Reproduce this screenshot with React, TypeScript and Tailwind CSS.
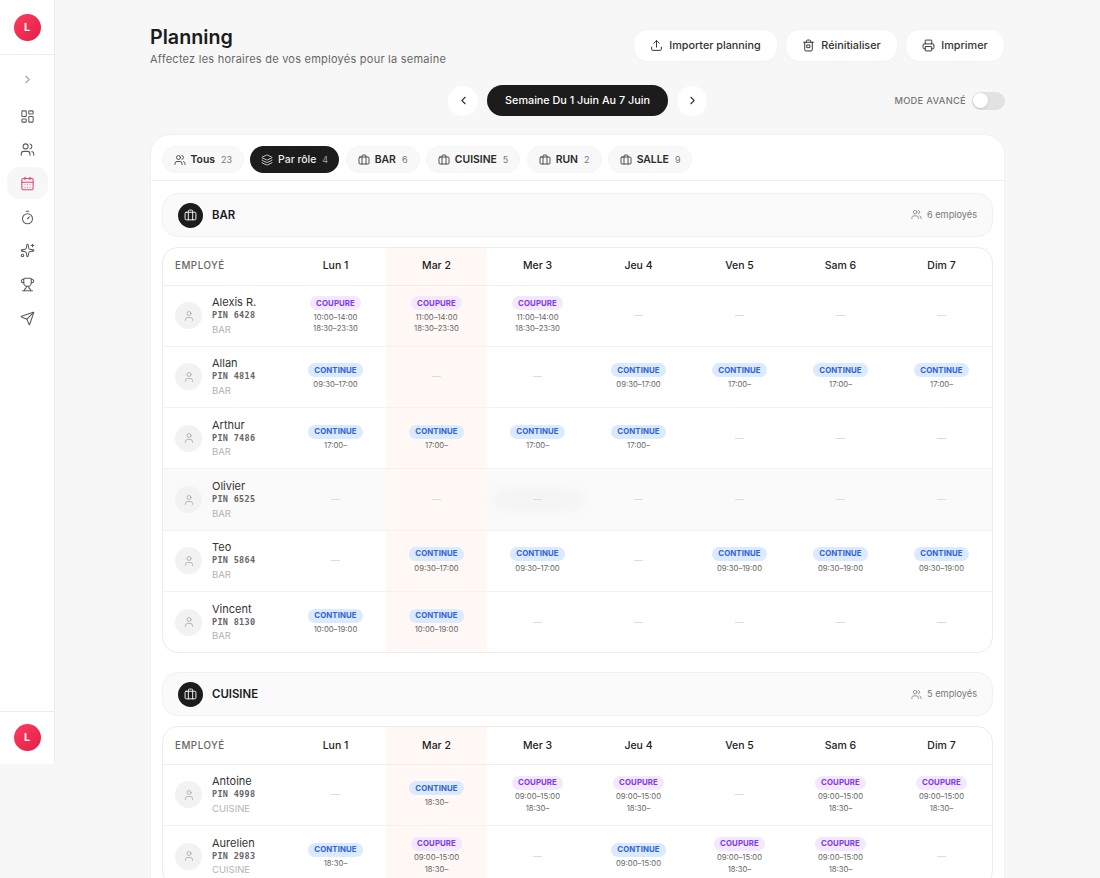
import {
  Briefcase,
  CalendarDays,
  ChevronLeft,
  ChevronRight,
  Layers,
  LayoutDashboard,
  Printer,
  Send,
  Sparkles,
  Timer,
  Trophy,
  Upload,
  User,
  Users,
} from 'lucide-react'

const jours = ['Lun 1', 'Mar 2', 'Mer 3', 'Jeu 4', 'Ven 5', 'Sam 6', 'Dim 7']

type Cell = null | { type: 'COUPURE' | 'CONTINUE'; heures: string[] }

const cou = (...heures: string[]): Cell => ({ type: 'COUPURE', heures })
const con = (...heures: string[]): Cell => ({ type: 'CONTINUE', heures })

type Employe = { nom: string; pin: string; cells: Cell[]; hover?: boolean }

const bar: Employe[] = [
  {
    nom: 'Alexis R.',
    pin: '6428',
    cells: [
      cou('10:00–14:00', '18:30–23:30'),
      cou('11:00–14:00', '18:30–23:30'),
      cou('11:00–14:00', '18:30–23:30'),
      null,
      null,
      null,
      null,
    ],
  },
  {
    nom: 'Allan',
    pin: '4814',
    cells: [
      con('09:30–17:00'),
      null,
      null,
      con('09:30–17:00'),
      con('17:00–'),
      con('17:00–'),
      con('17:00–'),
    ],
  },
  {
    nom: 'Arthur',
    pin: '7486',
    cells: [con('17:00–'), con('17:00–'), con('17:00–'), con('17:00–'), null, null, null],
  },
  { nom: 'Olivier', pin: '6525', cells: [null, null, null, null, null, null, null], hover: true },
  {
    nom: 'Teo',
    pin: '5864',
    cells: [
      null,
      con('09:30–17:00'),
      con('09:30–17:00'),
      null,
      con('09:30–19:00'),
      con('09:30–19:00'),
      con('09:30–19:00'),
    ],
  },
  {
    nom: 'Vincent',
    pin: '8130',
    cells: [con('10:00–19:00'), con('10:00–19:00'), null, null, null, null, null],
  },
]

const cuisine: Employe[] = [
  {
    nom: 'Antoine',
    pin: '4998',
    cells: [
      null,
      con('18:30–'),
      cou('09:00–15:00', '18:30–'),
      cou('09:00–15:00', '18:30–'),
      null,
      cou('09:00–15:00', '18:30–'),
      cou('09:00–15:00', '18:30–'),
    ],
  },
  {
    nom: 'Aurelien',
    pin: '2983',
    cells: [
      con('18:30–'),
      cou('09:00–15:00', '18:30–'),
      null,
      con('09:00–15:00'),
      cou('09:00–15:00', '18:30–'),
      cou('09:00–15:00', '18:30–'),
      null,
    ],
  },
]

function TrashBox({ size = 13, strokeWidth = 1.8 }: { size?: number; strokeWidth?: number }) {
  return (
    <svg
      width={size}
      height={size}
      viewBox="0 0 24 24"
      fill="none"
      stroke="currentColor"
      strokeWidth={strokeWidth}
      strokeLinecap="round"
      strokeLinejoin="round"
    >
      <path d="M3 6h18" />
      <path d="M8 6V4a2 2 0 0 1 2-2h4a2 2 0 0 1 2 2v2" />
      <path d="M5 6v14a2 2 0 0 0 2 2h10a2 2 0 0 0 2-2V6" />
      <rect x="9.5" y="11" width="5" height="5" />
    </svg>
  )
}

function Avatar() {
  return (
    <div className="flex h-[27px] w-[27px] items-center justify-center rounded-full bg-gradient-to-br from-[#ff3b5f] to-[#e11d48] text-[11px] font-bold text-white">
      L
    </div>
  )
}

function Sidebar() {
  const items = [LayoutDashboard, Users, CalendarDays, Timer, Sparkles, Trophy, Send]
  return (
    <aside className="flex h-[764px] w-[55px] shrink-0 flex-col border-r border-[#ededed] bg-white">
      <div className="flex h-[55px] items-center justify-center border-b border-[#ededed]">
        <Avatar />
      </div>
      <div className="flex flex-1 flex-col items-center pt-[18px]">
        <ChevronRight size={13} className="mb-[14px] text-[#a3a3a3]" />
        <div className="flex flex-col items-center gap-[1.7px]">
          {items.map((Icon, i) => (
            <div
              key={i}
              className={`flex h-[32px] w-[41px] items-center justify-center rounded-xl ${
                i === 2 ? 'bg-[#f7f7f7] text-[#e8456b]' : 'text-[#5c5c5c]'
              }`}
            >
              <Icon size={15} strokeWidth={1.7} />
            </div>
          ))}
        </div>
      </div>
      <div className="flex h-[53px] items-center justify-center border-t border-[#ededed] pb-[2px]">
        <Avatar />
      </div>
    </aside>
  )
}

function ActionButton({
  icon: Icon,
  label,
  width,
}: {
  icon: typeof Upload | typeof TrashBox
  label: string
  width: string
}) {
  return (
    <button
      className={`flex h-[33px] items-center justify-center gap-[6px] rounded-[14px] border border-[#f2f2f2] bg-white text-[10.8px] font-medium text-[#333333] ${width}`}
    >
      <Icon size={13} strokeWidth={1.8} />
      <span className="pt-[2px]">{label}</span>
    </button>
  )
}

function Tab({
  icon: Icon,
  label,
  count,
  width,
  active,
}: {
  icon: typeof Upload
  label: string
  count: number
  width: string
  active?: boolean
}) {
  return (
    <div
      className={`flex h-[27px] items-center justify-center rounded-full text-[10.4px] ${width} ${
        active
          ? 'bg-[#1c1c1c] font-medium text-[#f0f0f0]'
          : 'border border-[#f5f5f5] bg-[#f8f8f8] font-semibold text-[#2a2a2a]'
      }`}
    >
      <Icon size={12} strokeWidth={1.6} className="mr-[5px]" />
      <span>{label}</span>
      <span className={`ml-[6px] text-[9px] font-normal ${active ? 'text-[#a3a3a3]' : 'text-[#777777]'}`}>
        {count}
      </span>
    </div>
  )
}

function GroupHeader({ nom, nombre }: { nom: string; nombre: number }) {
  return (
    <div className="flex h-[44px] items-center justify-between rounded-2xl border border-[#f0f0f0] bg-[#fafafa] px-[15px]">
      <div className="flex items-center gap-[9px]">
        <div className="flex h-[25px] w-[25px] items-center justify-center rounded-full bg-[#1c1c1c] text-white">
          <Briefcase size={13} strokeWidth={1.7} />
        </div>
        <span className="pt-[1px] text-[11.4px] font-semibold text-[#1c1c1c]">{nom}</span>
      </div>
      <div className="flex items-center gap-[5px] text-[9.2px] text-[#777777]">
        <Users size={11} strokeWidth={1.6} />
        {nombre} employés
      </div>
    </div>
  )
}

function Shift({ cell }: { cell: Cell }) {
  if (!cell) return <span className="h-px w-[9px] bg-[#dcdcdc]" />
  const coupure = cell.type === 'COUPURE'
  return (
    <>
      <span
        className={`flex h-[14px] items-center rounded-full px-[6px] text-[7.8px] font-bold tracking-[0.1px] ${
          coupure ? 'bg-[#f3e8ff] text-[#7c3aed]' : 'bg-[#dbeafe] text-[#2f62d9]'
        }`}
      >
        {cell.type}
      </span>
      <div className="mt-[1.5px] flex flex-col items-center">
        {cell.heures.map((h) => (
          <span key={h} className="text-[7.7px] leading-[11.5px] text-[#666666]">
            {h}
          </span>
        ))}
      </div>
    </>
  )
}

function PlanningTable({ role, employes }: { role: string; employes: Employe[] }) {
  return (
    <div className="overflow-hidden rounded-2xl border border-[#ececec] bg-white">
      <div className="grid h-[37.5px] grid-cols-[122px_repeat(7,1fr)] border-b border-[#eeeeee]">
        <div className="flex items-center pt-[1px] pl-[12px] text-[9.8px] font-medium tracking-[0.5px] text-[#666666]">
          EMPLOYÉ
        </div>
        {jours.map((j, i) => (
          <div
            key={j}
            className={`flex items-center justify-center text-[10.5px] font-medium text-[#222222] ${
              i === 1 ? 'bg-[#fff8f5]' : ''
            }`}
          >
            {j}
          </div>
        ))}
      </div>
      {employes.map((e) => (
        <div
          key={e.nom}
          className={`grid h-[61.3px] grid-cols-[122px_repeat(7,1fr)] border-b border-[#f2f2f2] last:h-[60.3px] last:border-b-0 ${
            e.hover ? 'bg-[#fafafa]' : ''
          }`}
        >
          <div className="flex items-center gap-[10px] pl-[12px]">
            <div className="flex h-[27px] w-[27px] shrink-0 items-center justify-center rounded-full bg-[#f2f2f2] text-[#a3a3a3]">
              <User size={12} strokeWidth={1.5} />
            </div>
            <div className="flex flex-col">
              <span className="text-[11px] leading-[14px] text-[#333333]">{e.nom}</span>
              <span className="font-['DejaVu_Sans_Mono',monospace] text-[8.5px] leading-[13.5px] font-bold tracking-[0.3px] text-[#666666]">
                PIN {e.pin}
              </span>
              <span className="text-[9.5px] leading-[13.5px] text-[#b3b3b3]">{role}</span>
            </div>
          </div>
          {e.cells.map((c, i) => (
            <div
              key={i}
              className={`relative flex flex-col items-center justify-center ${i === 1 ? 'bg-[#fff8f5]' : ''}`}
            >
              {e.hover && i === 2 && (
                <div className="absolute inset-x-[6px] top-[18px] bottom-[17px] rounded-xl bg-[#f5f5f5] blur-[4px]" />
              )}
              <div className="relative flex flex-col items-center">
                <Shift cell={c} />
              </div>
            </div>
          ))}
        </div>
      ))}
    </div>
  )
}

export default function App() {
  return (
    <div className="flex h-[878px] overflow-hidden bg-[#f7f7f7] font-['Inter',sans-serif]">
      <Sidebar />
      <main className="min-w-0 flex-1 px-[95px] pt-[24px]">
        <div className="flex items-start justify-between">
          <div>
            <h1 className="mt-[1px] text-[19.7px] leading-[25px] font-semibold text-[#1c1c1c]">Planning</h1>
            <p className="mt-[2px] text-[11px] leading-[15px] tracking-[0.24px] text-[#666666]">
              Affectez les horaires de vos employés pour la semaine
            </p>
          </div>
          <div className="mt-[5px] flex gap-[7px]">
            <ActionButton icon={Upload} label="Importer planning" width="w-[145px]" />
            <ActionButton icon={TrashBox} label="Réinitialiser" width="w-[113px]" />
            <ActionButton icon={Printer} label="Imprimer" width="w-[100px]" />
          </div>
        </div>

        <div className="mt-[18px] flex h-[31px] items-center">
          <div className="ml-[298px] flex items-center gap-[9px]">
            <div className="flex h-[30px] w-[30px] items-center justify-center rounded-full bg-white text-[#333333]">
              <ChevronLeft size={13} />
            </div>
            <div className="flex h-[31px] w-[181px] items-center justify-center rounded-full bg-[#1c1c1c] pt-[2px] text-[10.8px] font-medium text-white">
              Semaine Du 1 Juin Au 7 Juin
            </div>
            <div className="flex h-[30px] w-[30px] items-center justify-center rounded-full bg-white text-[#333333]">
              <ChevronRight size={13} />
            </div>
          </div>
          <div className="ml-auto flex items-center gap-[6px]">
            <span className="text-[9.3px] font-medium tracking-[0.3px] text-[#777777]">MODE AVANCÉ</span>
            <div className="flex h-[18px] w-[33px] items-center rounded-full bg-[#e2e2e2]">
              <div className="h-[15px] w-[15px] translate-x-[1px] rounded-full bg-white shadow-sm" />
            </div>
          </div>
        </div>

        <div className="mt-[18px] rounded-t-[20px] border border-[#f0f0f0] bg-white">
          <div className="flex h-[46px] items-start gap-[6.5px] border-b border-[#eeeeee] pt-[11px] pl-[11px]">
            <Tab icon={Users} label="Tous" count={23} width="w-[81.6px]" />
            <Tab icon={Layers} label="Par rôle" count={4} width="w-[89px]" active />
            <Tab icon={Briefcase} label="BAR" count={6} width="w-[74px]" />
            <Tab icon={Briefcase} label="CUISINE" count={5} width="w-[94px]" />
            <Tab icon={Briefcase} label="RUN" count={2} width="w-[75px]" />
            <Tab icon={Briefcase} label="SALLE" count={9} width="w-[84px]" />
          </div>
          <div className="flex flex-col px-[11px] pt-[12px]">
            <GroupHeader nom="BAR" nombre={6} />
            <div className="mt-[10px]">
              <PlanningTable role="BAR" employes={bar} />
            </div>
            <div className="mt-[19px]">
              <GroupHeader nom="CUISINE" nombre={5} />
            </div>
            <div className="mt-[10px]">
              <PlanningTable role="CUISINE" employes={cuisine} />
            </div>
          </div>
        </div>
      </main>
    </div>
  )
}
